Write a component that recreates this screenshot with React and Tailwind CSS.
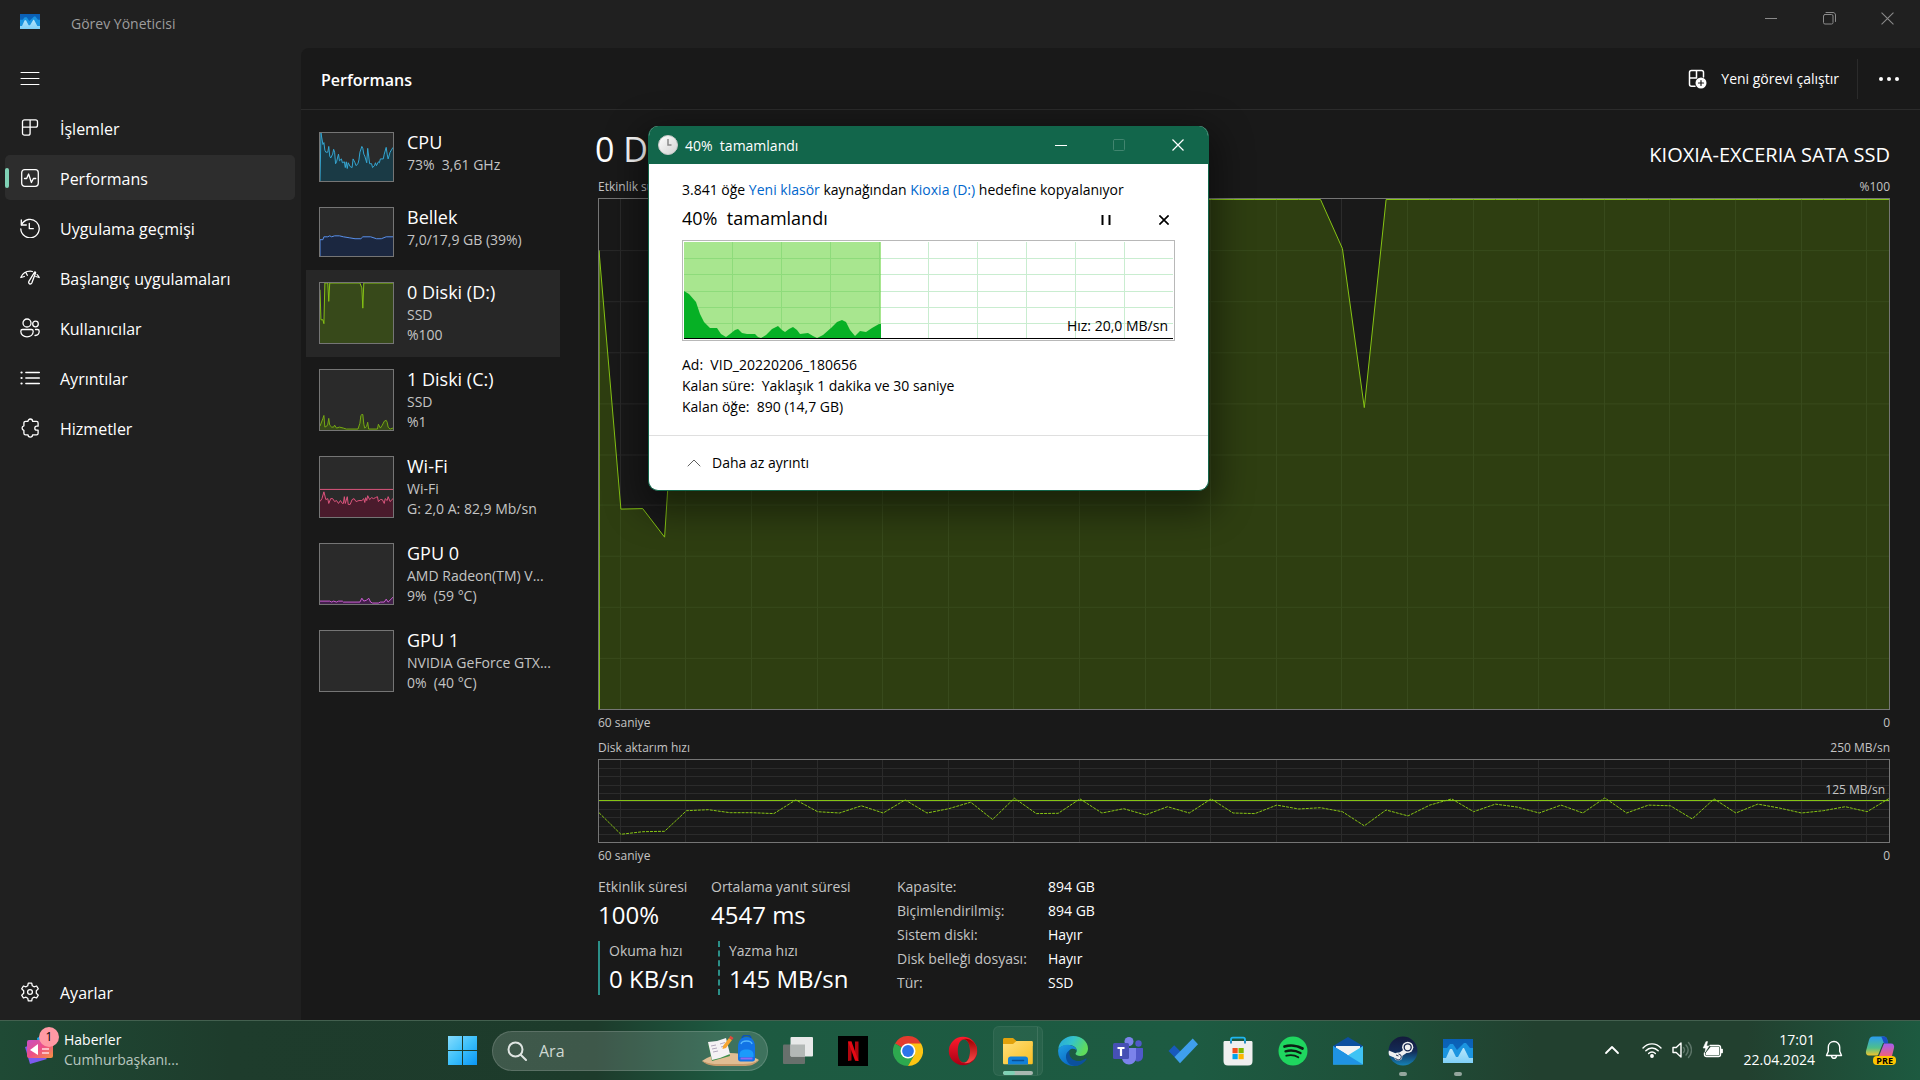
import React from "react";

const WHITE_STROKE = {
  fill: "none",
  stroke: "currentColor",
  strokeLinecap: "round",
  strokeLinejoin: "round",
};

/* ---------- icons ---------- */

function TaskManagerLogo({ className }) {
  return (
    <svg viewBox="0 0 30 24" preserveAspectRatio="none" className={className} aria-hidden="true">
      <defs>
        <linearGradient id="tmBack" x1="0" y1="0" x2="0" y2="1">
          <stop offset="0" stopColor="#0a5fb4" />
          <stop offset="1" stopColor="#0f6cc4" />
        </linearGradient>
        <linearGradient id="tmFront" x1="0" y1="0" x2="0" y2="1">
          <stop offset="0" stopColor="#b9e6fb" />
          <stop offset="1" stopColor="#7fd0f7" />
        </linearGradient>
      </defs>
      <rect width="30" height="24" fill="url(#tmBack)" />
      <path d="M0 9h4l3-4h3l4 6 4-4 3-3h2l4 5h3v15H0z" fill="#1b95e0" />
      <path d="M0 19h3l4-9h2l4 8h2l5-9h1l5 10h4v5H0z" fill="url(#tmFront)" />
    </svg>
  );
}

const navIcons = {
  processes: (
    <path d="M4.500 1.800h11c1.100 0 2 .9 2 2v3.400c0 1.100-.9 2-2 2h-5.400v6c0 1.100-.9 2-2 2H4.500c-1.100 0-2-.9-2-2V3.800c0-1.100.9-2 2-2zM10.100 1.800v7.400M2.500 9.200h7.600" />
  ),
  performance: (
    <>
      <rect x="1.700" y="1.700" width="16.600" height="16.600" rx="3" />
      <path d="M4.500 10.500h2.200L8.600 6l2.800 8.500 2-4h2.300" />
    </>
  ),
  history: (
    <>
      <path d="M1.300 2v5h5" />
      <path d="M1.600 6.800A9.200 9.200 0 1 1 .8 10.800" />
      <path d="M9.300 5.500v5.200h4" />
    </>
  ),
  startup: (
    <>
      <path d="M.8 9.500C2.300 6 6 3.200 10.200 3.200c.8 0 1.500.1 2.200.3M17.100 6.600c.9.900 1.600 1.800 2.100 2.900M1 9.500l3.400-1M15.800 8.500l3.300 1M6 4.700l1.300 2.600" />
      <path d="M14.600 4.200l-5.700 9.200c-.7 1.200.2 2.600 1.400 2.600.7 0 1.200-.4 1.500-1.100l3.800-10.100c.2-.6-.7-1.100-1-.6z" />
    </>
  ),
  users: (
    <>
      <circle cx="7" cy="5" r="4" />
      <circle cx="15.500" cy="6" r="2.800" />
      <path d="M2.600 11.500h8.800c1 0 1.800.8 1.800 1.800 0 3.300-2.600 5.500-6.200 5.500S.8 16.600.8 13.300c0-1 .8-1.800 1.800-1.800zM15.500 11.500h2c1 0 1.700.8 1.700 1.700 0 2.500-1.700 4.200-4.200 4.300" />
    </>
  ),
  details: (
    <>
      <path d="M5.800 4.500h13.600M5.800 10h13.600M5.800 15.500h13.600" />
      <path strokeWidth="2.200" d="M1.500 4.500h.1M1.500 10h.1M1.500 15.500h.1" />
    </>
  ),
  services: (
    <path d="M8 3.300a2.300 2.300 0 0 1 4.600 0h3.900c.9 0 1.600.7 1.600 1.600v3.300h-1.300a2 2 0 0 0 0 4h1.300v3c0 .9-.7 1.600-1.600 1.600h-3.900a2.300 2.300 0 0 1-4.600 0H5.600c-1 0-1.700-.7-1.700-1.600v-2.900a2.300 2.300 0 0 1 0-4.500V4.900c0-.9.700-1.600 1.700-1.600z" />
  ),
  settings: (
    <>
      <circle cx="10" cy="10" r="2.400" />
      <path d="M8.300 1.200h3.400l.6 2.600 1.700 1 2.600-.8 1.700 2.900-2 1.900v2.400l2 1.900-1.700 2.900-2.600-.8-1.700 1-.6 2.600H8.300l-.6-2.600-1.700-1-2.600.8-1.700-2.900 2-1.900V8.800l-2-1.900L3.400 4l2.600.8 1.700-1z" />
    </>
  ),
};

function NavIcon({ name }) {
  return (
    <svg viewBox="0 0 20 20" className="size-5 shrink-0" strokeWidth="1.300" {...WHITE_STROKE} aria-hidden="true">
      {navIcons[name]}
    </svg>
  );
}

function Minus({ className }) {
  return (
    <svg viewBox="0 0 12 12" className={className} aria-hidden="true">
      <path d="M0 6.500h12" stroke="currentColor" />
    </svg>
  );
}

function Cross({ className, width = 1 }) {
  return (
    <svg viewBox="0 0 12 12" className={className} aria-hidden="true">
      <path d="M.5.5l11 11M11.500.5l-11 11" stroke="currentColor" strokeWidth={width} />
    </svg>
  );
}

/* ---------- charts ---------- */

const GREEN = "#86c414";

function areaPath(points, w, h) {
  return `M0 ${h} L${points.map((p) => p.join(" ")).join(" L")} L${w} ${h} Z`;
}

function linePath(points) {
  return `M${points.map((p) => p.join(" ")).join(" L")}`;
}

function pairs(text) {
  return text.split(" ").map((p) => p.split(",").map(Number));
}

function MiniChart({ points, color, fill, tall, limit }) {
  const h = tall ? 62 : 50;
  return (
    <span className={`block w-[75px] shrink-0 border border-[#757575] bg-[#2a2a2a] ${tall ? "h-[62px]" : "h-[50px]"}`}>
      {points && (
        <svg viewBox={`0 0 75 ${h}`} preserveAspectRatio="none" className="block size-full" aria-hidden="true">
          <path d={areaPath(points, 75, h)} fill={fill} />
          <path d={linePath(points)} fill="none" stroke={color} />
          {limit && <path d={`M0 ${limit}h75`} stroke={color} />}
        </svg>
      )}
    </span>
  );
}

const series = {
  cpu: pairs(
    "0,50 1,0 3,12 4,10 5,18 6,20 8,20 9,14 10,24 11,26 13,22 14,17 15,20 16,32 17,30 19,22 20,29 22,27 23,31 25,30 26,36 27,30 28,37 29,31 31,35 33,36 34,27 36,31 37,34 39,32 40,28 41,20 43,14 44,16 45,22 46,24 48,31 49,16 50,24 51,32 53,32 54,36 56,34 57,31 58,34 60,30 61,31 62,27 65,27 66,22 68,15 69,22 70,27 72,20 75,15"
  ),
  memory: pairs("0,50 0,33 3,33 4,30 8,30 10,29 12,30 15,29 20,29 24,30 30,31 36,32 42,32 44,30 52,30 58,32 63,32 68,30 75,30"),
  disk0: pairs("0,7 1,38 3,38 4,42 5,0 8,0 9,19 10,0 41,0 43,5 44,26 45,0 75,0"),
  disk1: pairs(
    "0,58 3,50 4,47 5,59 7,58 8,56 9,50 10,57 12,59 14,59 15,57 17,60 20,59 24,60 27,61 39,61 41,55 42,47 43,46 44,46 45,56 46,60 48,58 49,54 50,61 59,61 60,56 62,60 64,57 66,53 68,52 69,54 70,59 72,61 75,60"
  ),
  wifi: pairs(
    "0,46 2,43 4,36 6,44 8,43 9,48 11,43 13,43 15,46 17,45 19,48 21,45 23,48 24,48 25,41 26,48 28,41 29,49 31,49 33,44 35,43 37,46 40,45 43,45 45,43 46,47 47,42 48,45 49,40 51,44 53,42 55,43 57,42 59,41 60,46 62,44 64,44 66,48 67,43 69,45 70,41 72,46 75,43"
  ),
  gpu0: pairs("0,59 10,59 12,60 14,59 17,60 19,59 23,59 24,60 41,60 43,56 45,59 48,58 50,56 52,60 54,61 60,61 62,60 66,60 68,57 70,60 73,57 75,55"),
};

/* 60 samples of disk activity, 0 = idle and 1 = fully busy */
const activity = Array.from({ length: 60 }, (_, i) => {
  const dips = { 0: 0.9, 1: 0.393, 2: 0.394, 3: 0.338, 7: 0.7, 34: 0.904, 35: 0.592 };
  return i in dips ? dips[i] : 1;
});

/* 60 samples of write speed, in MB/sn */
const transfer = [
  91, 25, 33, 34, 97, 100, 91, 91, 88, 130, 94, 90, 112, 90, 130, 90, 103, 123, 70, 135, 88, 89, 133, 90, 103, 84, 109,
  90, 133, 90, 88, 114, 102, 106, 94, 51, 99, 81, 114, 133, 94, 117, 108, 90, 114, 90, 136, 90, 114, 112, 72, 133, 90,
  117, 105, 90, 97, 109, 94, 134,
];

function Grid({ w, h, rows, color }) {
  const step = w / 59;
  const lines = [];
  for (let i = 1; i < 59; i += 3) {
    lines.push(`M${Math.round(step * i) - 0.5} 0V${h}`);
  }
  for (let r = 1; r < rows; r += 1) {
    lines.push(`M0 ${Math.round((h / rows) * r) + 0.5}H${w}`);
  }
  return <path d={lines.join("")} stroke={color} vectorEffect="non-scaling-stroke" />;
}

function ActivityChart() {
  const w = 1290;
  const h = 509;
  const pts = activity.map((v, i) => [((w / 59) * i).toFixed(1), ((1 - v) * h + 0.5).toFixed(1)]);
  return (
    <div className="flex min-h-[300px] flex-1 flex-col border border-[#757575]">
      <svg viewBox={`0 0 ${w} ${h}`} preserveAspectRatio="none" className="block h-0 min-h-0 w-full flex-1" role="img" aria-label="Etkinlik süresi">
        <Grid w={w} h={h} rows={10} color="#2b2b2b" />
        <path d={areaPath(pts, w, h)} fill="#2e3e11" />
        <clipPath id="activityClip">
          <path d={areaPath(pts, w, h)} />
        </clipPath>
        <g clipPath="url(#activityClip)">
          <Grid w={w} h={h} rows={10} color="#384a1c" />
        </g>
        <path d={`M.5 ${h} L${linePath(pts).slice(1)}`} fill="none" stroke={GREEN} vectorEffect="non-scaling-stroke" />
      </svg>
    </div>
  );
}

function TransferChart() {
  const w = 1290;
  const h = 82;
  const pts = transfer.map((v, i) => [((w / 59) * i).toFixed(1), ((1 - v / 250) * h + 0.5).toFixed(1)]);
  return (
    <div className="relative h-[84px] border border-[#757575]">
      <svg viewBox={`0 0 ${w} ${h}`} preserveAspectRatio="none" className="block size-full" role="img" aria-label="Disk aktarım hızı">
        <Grid w={w} h={h} rows={10} color="#2b2b2b" />
        <path d={`M0 40.500H${w}`} stroke={GREEN} vectorEffect="non-scaling-stroke" />
        <path d={linePath(pts)} fill="none" stroke={GREEN} strokeDasharray="3 1" vectorEffect="non-scaling-stroke" />
      </svg>
      <span className="absolute top-[21px] right-1 text-xs leading-[18px] text-[#c4c4c4]">125 MB/sn</span>
    </div>
  );
}

/* ---------- task manager window ---------- */

const navItems = [
  ["processes", "İşlemler"],
  ["performance", "Performans"],
  ["history", "Uygulama geçmişi"],
  ["startup", "Başlangıç uygulamaları"],
  ["users", "Kullanıcılar"],
  ["details", "Ayrıntılar"],
  ["services", "Hizmetler"],
];

function NavButton({ icon, label, active }) {
  return (
    <button
      type="button"
      aria-current={active ? "page" : undefined}
      className={`flex h-[45px] w-full items-center rounded-[5px] text-left text-base text-white ${active ? "bg-[#2d2d2d]" : ""}`}
    >
      <span className={`mr-[11px] h-5 w-1 rounded-full ${active ? "bg-[#7fd1b5]" : ""}`} />
      <NavIcon name={icon} />
      <span className="ml-5 pt-0.5">{label}</span>
    </button>
  );
}

function Sidebar() {
  return (
    <nav className="flex w-[301px] shrink-0 flex-col px-[5px] pr-1.5">
      <button type="button" aria-label="Gezinti" className="mb-[5px] flex h-[52px] items-center pt-2 pl-[15px] text-white">
        <svg viewBox="0 0 20 16" className="h-4 w-5" {...WHITE_STROKE} aria-hidden="true">
          <path d="M1 2.500h18M1 8.500h18M1 14.500h18" />
        </svg>
      </button>
      <div className="flex flex-1 flex-col gap-[5px]">
        {navItems.map(([icon, label]) => (
          <NavButton key={icon} icon={icon} label={label} active={icon === "performance"} />
        ))}
      </div>
      <div className="pb-1.5">
        <NavButton icon="settings" label="Ayarlar" />
      </div>
    </nav>
  );
}

const resources = [
  { name: "CPU", lines: ["73%  3,61 GHz"], chart: { points: series.cpu, color: "#35a9d6", fill: "#1a3a45" } },
  { name: "Bellek", lines: ["7,0/17,9 GB (39%)"], chart: { points: series.memory, color: "#5b93ee", fill: "#1b2740" } },
  { name: "0 Diski (D:)", lines: ["SSD", "%100"], active: true, chart: { points: series.disk0, color: GREEN, fill: "#37491a", tall: true } },
  { name: "1 Diski (C:)", lines: ["SSD", "%1"], chart: { points: series.disk1, color: "#78ab14", fill: "#37491a", tall: true } },
  { name: "Wi-Fi", lines: ["Wi-Fi", "G: 2,0 A: 82,9 Mb/sn"], chart: { points: series.wifi, color: "#e0567f", fill: "#4a1b2c", tall: true, limit: 33.5 } },
  { name: "GPU 0", lines: ["AMD Radeon(TM) V...", "9%  (59 °C)"], chart: { points: series.gpu0, color: "#cf5fd8", fill: "#42204a", tall: true } },
  { name: "GPU 1", lines: ["NVIDIA GeForce GTX...", "0%  (40 °C)"], chart: { tall: true } },
];

function ResourceList() {
  return (
    <div className="ml-[5px] flex w-[254px] shrink-0 flex-col pt-2.5">
      {resources.map((r) => (
        <button
          key={r.name}
          type="button"
          className={`flex gap-[13px] py-3 pl-[13px] text-left ${r.chart.tall ? "h-[87px]" : "h-[75px]"} ${r.active ? "bg-[#272727]" : ""}`}
        >
          <MiniChart {...r.chart} />
          <span className="block whitespace-pre">
            <span className="-mt-0.5 mb-px block text-lg leading-6 text-white">{r.name}</span>
            {r.lines.map((l) => (
              <span key={l} className="block text-sm leading-5 text-[#c4c4c4]">
                {l}
              </span>
            ))}
          </span>
        </button>
      ))}
    </div>
  );
}

function ChartCaption({ left, right, className }) {
  return (
    <div className={`flex justify-between text-xs leading-[18px] text-[#c4c4c4] ${className}`}>
      <span>{left}</span>
      <span>{right}</span>
    </div>
  );
}

function Stat({ label, value, border }) {
  return (
    <div className={border}>
      <dt className="text-sm leading-5 text-[#c4c4c4]">{label}</dt>
      <dd className="mt-0.5 text-2xl leading-8 text-white">{value}</dd>
    </div>
  );
}

const facts = [
  ["Kapasite:", "894 GB"],
  ["Biçimlendirilmiş:", "894 GB"],
  ["Sistem diski:", "Hayır"],
  ["Disk belleği dosyası:", "Hayır"],
  ["Tür:", "SSD"],
];

function DiskDetail() {
  return (
    <section className="ml-[38px] flex min-w-0 flex-1 flex-col pt-4 pr-[30px] pb-[25px]">
      <div className="flex items-baseline justify-between text-white">
        <h2 className="-ml-[3px] text-[34px] leading-[46px]">0 Diski (D:)</h2>
        <span className="text-xl leading-6">KIOXIA-EXCERIA SATA SSD</span>
      </div>
      <ChartCaption left="Etkinlik süresi" right="%100" className="mt-1.5 mb-0.5" />
      <ActivityChart />
      <ChartCaption left="60 saniye" right="0" className="mt-1" />
      <ChartCaption left="Disk aktarım hızı" right="250 MB/sn" className="mt-[7px] mb-0.5" />
      <TransferChart />
      <ChartCaption left="60 saniye" right="0" className="mt-1" />
      <div className="mt-3 flex">
        <dl className="grid w-[299px] grid-cols-[113px_auto] gap-y-2.5">
          <Stat label="Etkinlik süresi" value="100%" />
          <Stat label="Ortalama yanıt süresi" value="4547 ms" />
          <Stat label="Okuma hızı" value="0 KB/sn" border="border-l-2 border-[#2b8f88] pl-[9px]" />
          <Stat label="Yazma hızı" value="145 MB/sn" border="ml-[7px] border-l-2 border-dashed border-[#2b8f88] pl-[9px]" />
        </dl>
        <dl className="-mt-0.5 grid grid-cols-[151px_auto] content-start text-sm leading-6">
          {facts.map(([k, v]) => (
            <React.Fragment key={k}>
              <dt className="text-[#c4c4c4]">{k}</dt>
              <dd className="text-white">{v}</dd>
            </React.Fragment>
          ))}
        </dl>
      </div>
    </section>
  );
}

function TitleBar() {
  return (
    <header className="flex h-12 shrink-0 items-start bg-[#202020]">
      <TaskManagerLogo className="mt-3.5 ml-5 h-[15px] w-5" />
      <h1 className="mt-3.5 ml-[31px] flex-1 text-sm leading-5 text-[#9d9d9d]">Görev Yöneticisi</h1>
      <div className="flex text-[#8a8a8a]">
        <button type="button" aria-label="Simge durumuna küçült" className="grid h-9 w-[58px] place-items-center">
          <Minus className="size-3" />
        </button>
        <button type="button" aria-label="Önceki boyut" className="grid h-9 w-[58px] place-items-center">
          <svg viewBox="0 0 13 13" className="size-[13px]" {...WHITE_STROKE} aria-hidden="true">
            <rect x=".5" y="2.500" width="9.500" height="9.500" rx="1.500" />
            <path d="M3 .5h7c1.400 0 2.500 1.100 2.500 2.500v6.500" />
          </svg>
        </button>
        <button type="button" aria-label="Kapat" className="mr-[3px] grid h-9 w-[59px] place-items-center">
          <Cross className="size-[13px]" />
        </button>
      </div>
    </header>
  );
}

function Toolbar() {
  return (
    <div className="flex h-[62px] shrink-0 items-center border-b border-[#2b2b2b] pl-5 text-white">
      <h2 className="flex-1 pt-0.5 text-base font-semibold">Performans</h2>
      <button type="button" className="flex items-center text-sm">
        <svg viewBox="0 0 20 20" className="mr-3.5 size-5" strokeWidth="1.500" {...WHITE_STROKE} aria-hidden="true">
          <path d="M8 17.200H4.500c-1.200 0-2-.8-2-2V3.500c0-1.200.8-2 2-2h10c1.200 0 2 .8 2 2V8M9.500 1.500V9M2.500 9h7" />
          <circle cx="14" cy="14" r="5.500" fill="#fff" stroke="none" />
          <path d="M14 11.500v5M11.500 14h5" stroke="#191919" strokeWidth="1.200" />
        </svg>
        Yeni görevi çalıştır
      </button>
      <span className="ml-[18px] h-10 w-px bg-[#2b2b2b]" />
      <button type="button" aria-label="Diğer" className="grid h-10 w-[62px] place-items-center">
        <svg viewBox="0 0 20 4" className="h-1 w-5" fill="currentColor" aria-hidden="true">
          <circle cx="2" cy="2" r="2" />
          <circle cx="10" cy="2" r="2" />
          <circle cx="18" cy="2" r="2" />
        </svg>
      </button>
    </div>
  );
}

/* ---------- copy dialog ---------- */

const copyCurve = pairs(
  "0,49 5,52 12,60 16,72 20,80 26,86 33,86 37,92 42,95 46,92 51,88 54,87 58,91 63,92 71,92 74,95 77,96 82,93 88,87 94,84 98,88 101,90 105,87 109,85 113,88 116,92 124,91 129,94 133,96 139,93 147,86 153,80 158,78 162,80 166,88 171,94 176,89 182,90 188,86 195,82 197,82"
);

function CopyGraph() {
  const lines = [];
  for (let i = 1; i < 10; i += 1) lines.push(`M${49 * i - 0.5} 0V96`);
  [16.5, 32.5, 49.5, 65.5, 81.5].forEach((y) => lines.push(`M0 ${y}H489`));
  return (
    <div className="relative mt-2 border border-[#b8b8b8] p-px">
      <svg viewBox="0 0 489 97" preserveAspectRatio="none" className="block h-[97px] w-full" role="img" aria-label="Kopyalama hızı">
        <path d={lines.join("")} stroke="#c9edd0" />
        <rect width="197" height="97" fill="#a8e68f" />
        <clipPath id="copyDone">
          <rect width="197" height="97" />
        </clipPath>
        <path d={lines.join("")} stroke="#8edb7b" clipPath="url(#copyDone)" />
        <path d={areaPath(copyCurve, 197, 97)} fill="#06b025" />
        <path d="M0 96.500H489" stroke="#000" />
      </svg>
      <span className="absolute right-1.5 bottom-1 text-sm leading-5">Hız: 20,0 MB/sn</span>
    </div>
  );
}

function CopyDialog() {
  return (
    <div
      role="dialog"
      aria-label="40% tamamlandı"
      className="absolute top-[126px] left-[648px] w-[561px] overflow-hidden rounded-[10px] border border-t-0 border-[#12664b] bg-white text-sm text-black shadow-[0_12px_36px_8px_rgba(0,0,0,0.45)]"
    >
      <div className="flex h-[38px] items-center bg-[#12664b] pl-[9px] text-white">
        <svg viewBox="0 0 20 20" className="size-5" aria-hidden="true">
          <defs>
            <linearGradient id="clockFace" x1="0" y1="0" x2="1" y2="1">
              <stop offset="0" stopColor="#fff" />
              <stop offset="1" stopColor="#d2d2d2" />
            </linearGradient>
          </defs>
          <circle cx="10" cy="10" r="9.500" fill="url(#clockFace)" stroke="#c8c8c8" />
          <path d="M10 4v6h3.500" fill="none" stroke="#8a8a8a" strokeWidth="1.500" />
        </svg>
        <span className="ml-[7px] flex-1 pt-0.5 whitespace-pre">40%  tamamlandı</span>
        <button type="button" aria-label="Simge durumuna küçült" className="grid h-full w-[58px] place-items-center">
          <Minus className="size-3" />
        </button>
        <button type="button" disabled aria-label="Ekranı kapla" className="grid h-full w-[58px] place-items-center text-[#41856f]">
          <svg viewBox="0 0 12 12" className="size-3" {...WHITE_STROKE} aria-hidden="true">
            <rect x=".5" y=".5" width="11" height="11" rx="1" />
          </svg>
        </button>
        <button type="button" aria-label="Kapat" className="grid h-full w-[60px] place-items-center">
          <Cross className="size-3" width={1.2} />
        </button>
      </div>
      <div className="px-[33px] pt-4 pb-[18px]">
        <p className="leading-5">
          3.841 öğe{" "}
          <a href="#kaynak" className="text-[#0066cc]">
            Yeni klasör
          </a>{" "}
          kaynağından{" "}
          <a href="#hedef" className="text-[#0066cc]">
            Kioxia (D:)
          </a>{" "}
          hedefine kopyalanıyor
        </p>
        <div className="mt-1 -mr-[3px] flex h-7 items-center">
          <h3 className="flex-1 text-lg whitespace-pre">40%  tamamlandı</h3>
          <button type="button" aria-label="Duraklat" className="grid size-7 place-items-center pt-1">
            <svg viewBox="0 0 10 10" className="size-2.5" aria-hidden="true">
              <path d="M1.500 0v10M8.500 0v10" stroke="#000" strokeWidth="2" />
            </svg>
          </button>
          <button type="button" aria-label="İptal" className="ml-[30px] grid size-7 place-items-center pt-1">
            <Cross className="size-2.5" width={2} />
          </button>
        </div>
        <CopyGraph />
        <div className="mt-[13px] leading-[21px] whitespace-pre">
          <p>Ad:  VID_20220206_180656</p>
          <p>Kalan süre:  Yaklaşık 1 dakika ve 30 saniye</p>
          <p>Kalan öğe:  890 (14,7 GB)</p>
        </div>
      </div>
      <div className="border-t border-[#dfdfdf]">
        <button type="button" className="flex h-[54px] items-center pl-[38px] text-sm">
          <svg viewBox="0 0 14 8" className="mr-[11px] h-2 w-3.5" {...WHITE_STROKE} stroke="#606060" aria-hidden="true">
            <path d="M1 7l6-6 6 6" />
          </svg>
          Daha az ayrıntı
        </button>
      </div>
    </div>
  );
}

/* ---------- taskbar ---------- */

const appIcons = {
  "Görev görünümü": (
    <>
      <rect x="0" y="8.500" width="22" height="19.500" rx="1" fill="#68706c" />
      <rect x="7.500" y="1" width="22.500" height="19.500" rx="1" fill="#e8e9e9" />
      <path d="M7.500 8.500H22v12H8.500a1 1 0 0 1-1-1z" fill="#b3b8b6" />
    </>
  ),
  Netflix: (
    <>
      <rect width="30" height="30" fill="#000" />
      <path d="M10 5.500h3.500v19L10 25zM17 5.500h3.500v19.500l-3.500-.5z" fill="#b1060f" />
      <path d="M10 5.500h3.500L20.500 25l-3.500-.5z" fill="#e50914" />
    </>
  ),
  Chrome: (
    <>
      <path d="M15 15L2 7.500A15 15 0 0 1 28 7.500z" fill="#e33b2e" />
      <path d="M15 15L2 7.500A15 15 0 0 0 15 30l6.500-11.200z" fill="#2da94f" />
      <path d="M15 7.500h13A15 15 0 0 1 15 30l6.500-11.200z" fill="#fdc413" />
      <circle cx="15" cy="15" r="7.500" fill="#fff" />
      <circle cx="15" cy="15" r="5.900" fill="#2b74ea" />
    </>
  ),
  Opera: (
    <>
      <defs>
        <linearGradient id="operaA" x1="0" y1="0" x2="0" y2="1">
          <stop offset="0" stopColor="#ff1b2d" />
          <stop offset="1" stopColor="#a70014" />
        </linearGradient>
        <linearGradient id="operaB" x1="0" y1="0" x2="0" y2="1">
          <stop offset="0" stopColor="#9c0000" />
          <stop offset="1" stopColor="#ff4b4b" />
        </linearGradient>
      </defs>
      <path fillRule="evenodd" d="M15 .8a14.200 14.200 0 1 1 0 28.400 14.200 14.200 0 1 1 0-28.400zM16 3.500c-4 0-6.200 5-6.200 11.500S12 26.500 16 26.500 22 21.500 22 15 20 3.500 16 3.500z" fill="url(#operaA)" />
      <path d="M11 6C16-1 29 4 29 15S16 31 11 24c2 2.500 4 3 6 2.500 3-.8 5-5.500 5-11.500S20 4.300 17 3.500c-2-.5-4 0-6 2.500z" fill="url(#operaB)" />
    </>
  ),
  "Dosya Gezgini": (
    <>
      <defs>
        <linearGradient id="folder" x1="0" y1="0" x2="1" y2="1">
          <stop offset="0" stopColor="#ffdf7a" />
          <stop offset="1" stopColor="#f9bf22" />
        </linearGradient>
      </defs>
      <path d="M0 3.500C0 2.700.7 2 1.500 2H10l3.500 3H28c1 0 1.800.5 1.800 1.500V10H0z" fill="#e2a20c" />
      <path d="M0 8h10l3.500-3h15c.8 0 1.300.6 1.300 1.400V27c0 .8-.5 1.300-1.300 1.300h-27C.6 28.300 0 27.800 0 27z" fill="url(#folder)" />
      <path d="M5 28.500v-5.200c0-1.600 1.100-2.700 2.700-2.700h14.600c1.600 0 2.700 1.100 2.700 2.700v5.200z" fill="#1280d8" />
      <path d="M9.500 24.500h11" stroke="#0a4f94" strokeWidth="1.500" strokeLinecap="round" />
    </>
  ),
  Edge: (
    <>
      <defs>
        <linearGradient id="edgeA" x1="0" y1="0" x2="1" y2=".4">
          <stop offset="0" stopColor="#23a3e0" />
          <stop offset=".5" stopColor="#35c4c9" />
          <stop offset="1" stopColor="#5fdc5c" />
        </linearGradient>
        <linearGradient id="edgeB" x1="0" y1="0" x2=".7" y2="1">
          <stop offset="0" stopColor="#1f9fe4" />
          <stop offset="1" stopColor="#0762c0" />
        </linearGradient>
      </defs>
      <path d="M.3 13C1 5.500 7.500 0 15.200 0 24 0 30 6 30 12.500c0 4.500-3.300 7.500-7.500 7.500-3 0-5-1-5-2.200 0-.8 1.300-1.500 1.300-3.300 0-3-3.500-5.500-7.800-5.500C6 9 2.500 10.500.3 13z" fill="url(#edgeA)" />
      <path d="M.2 13.500C2 10.300 6 8.500 10 8.800c5 .3 8.800 3 8.800 6-1-1.600-3-2.500-5-2-3.300.8-4.500 4.700-3.300 8.300 1.700 5 7 7.900 12 6.800A15 15 0 0 1 .2 13.500z" fill="url(#edgeB)" />
      <path d="M12 14c-2 4 .5 9.500 6 10.800 3.500.8 7-.3 9.800-2.300.5-.3 1 .2.700.7C26.500 26.500 22 30 16.500 30 10.500 29.500 7.500 24 8 19.500c.3-2.500 2-4.500 4-5.500z" fill="#0b519d" />
    </>
  ),
  Teams: (
    <>
      <circle cx="16" cy="5.500" r="4.500" fill="#7b83eb" />
      <circle cx="25.500" cy="7.500" r="3.200" fill="#5059c9" />
      <path d="M20 12h9.500c.3 0 .5.200.5.500V20c0 3.300-2.500 5.500-5.200 5.500S20 23 20 20z" fill="#5059c9" />
      <path d="M9 12h14v9.500c0 4-3 7-7 7s-7-3-7-7z" fill="#7b83eb" />
      <rect x="0" y="7" width="16" height="16" rx="1.500" fill="#4650b4" />
      <path d="M4.500 11h7v2.100H9.100v6.900H6.900v-6.900H4.500z" fill="#fff" />
    </>
  ),
  "To Do": (
    <>
      <path d="M.5 15l5.700-5.700 8.500 8.500-5.800 5.600z" fill="#185abd" />
      <path d="M6.500 21L24.700 2.500 30 8.300 12 27.200z" fill="#3f9fec" />
    </>
  ),
  Store: (
    <>
      <path d="M8 7V3.500C8 2.300 8.700 1.700 9.800 1.700h10.400c1.100 0 1.800.6 1.800 1.800V7" fill="none" stroke="#1fb6f0" strokeWidth="1.800" />
      <path d="M.5 6.500C.5 5.500 1 5 2 5h26c1 0 1.500.5 1.500 1.500V25c0 3-1.500 4.500-4.500 4.500H5C2 29.500.5 28 .5 25z" fill="#efefef" />
      <path d="M8 7.500V5M22 7.500V5" stroke="#1583bd" strokeWidth="1.800" />
      <rect x="9.500" y="12" width="5.200" height="5.200" fill="#f04e1f" />
      <rect x="15.500" y="12" width="5.200" height="5.200" fill="#7eb900" />
      <rect x="9.500" y="18" width="5.200" height="5.200" fill="#00a3ee" />
      <rect x="15.500" y="18" width="5.200" height="5.200" fill="#fdb700" />
    </>
  ),
  Spotify: (
    <>
      <circle cx="15" cy="15" r="14.500" fill="#1fd65f" />
      <g fill="none" stroke="#0c1f14" strokeLinecap="round">
        <path d="M6.500 10.500c5.500-1.700 13-1 18 2" strokeWidth="2.700" />
        <path d="M7.500 15.300c5-1.400 10.500-.8 15 1.800" strokeWidth="2.300" />
        <path d="M8.300 19.700c4-1 8.500-.6 12 1.500" strokeWidth="1.900" />
      </g>
    </>
  ),
  Posta: (
    <>
      <path d="M0 10L15 1l15 9v5H0z" fill="#0d4f9e" />
      <path d="M3 10h24v6l-12 7L3 16z" fill="#f2f2f2" />
      <path d="M0 10l15 9L0 28.500z" fill="#1a8fe0" />
      <path d="M30 10L0 28.500h30z" fill="#3fc3f4" />
      <path d="M0 10l30 18.500H0z" fill="#1f93e3" />
      <path d="M3 10h24L15 19z" fill="#f2f2f2" />
    </>
  ),
  Steam: (
    <>
      <defs>
        <linearGradient id="steam" x1="0" y1="0" x2="0" y2="1">
          <stop offset="0" stopColor="#131a3b" />
          <stop offset=".5" stopColor="#142a56" />
          <stop offset="1" stopColor="#1582b6" />
        </linearGradient>
        <clipPath id="steamDisc">
          <circle cx="15" cy="15" r="14.500" />
        </clipPath>
      </defs>
      <circle cx="15" cy="15" r="14.500" fill="url(#steam)" />
      <g clipPath="url(#steamDisc)">
        <path d="M0 16.500l9.500 4 9.500-6.500" fill="none" stroke="#f0f0f0" strokeWidth="4.500" />
      </g>
      <circle cx="19.700" cy="11.300" r="5.600" fill="#f0f0f0" />
      <circle cx="19.700" cy="11.300" r="3.500" fill="#f0f0f0" stroke="#14244c" strokeWidth="1.300" />
      <circle cx="10.300" cy="20.500" r="4" fill="#f0f0f0" />
      <path d="M8 19l2.500 1M7.500 22a3 3 0 1 0 3-4" fill="none" stroke="#14244c" strokeWidth=".9" />
    </>
  ),
};

function SearchArt() {
  return (
    <svg viewBox="0 0 57 32" className="h-8 w-[57px]" aria-hidden="true">
      <path d="M0 26c6-4 14-8 28-8s24 4 29 7c-5 4-10 5-16 5H17c-8 0-13-2-17-4z" fill="#e0bd93" />
      <path d="M0 26c6 2.500 11 3 17 3h24c6 0 11-1 16-4-4 5-9 6-16 6H17c-8 0-14-2-17-5z" fill="#c79a6a" />
      <path d="M6 9l18-4 4 16-18 5z" fill="#3f8f4a" />
      <path d="M6 7l9-1 3 17-8 2zM15 6l9-3 4 16-10 4z" fill="#f5f2f4" />
      <path d="M9 11l5-1M10 14l5-1M11 17l5-1M18 9l5-1.500M19 12l5-1.500" stroke="#b3a9bd" />
      <path d="M21 11l6-8 3 2-6 8-3.500 1z" fill="#f6a531" />
      <path d="M27 3l1.500-2.300L31.500 3 30 5z" fill="#e0483c" />
      <path d="M40 4c0-5 9-5 9 0" fill="none" stroke="#0c53b8" strokeWidth="1.500" />
      <path d="M36 12c0-6 3-10 8.500-10S53 6 53 12v12c0 1.500-1 2.500-2.500 2.500h-12C37 26.500 36 25.500 36 24z" fill="#1273e6" />
      <path d="M39 9c1-4 10-4 11 0" fill="none" stroke="#52b6fb" strokeWidth="1.500" />
      <path d="M37.500 20c0-4 2.500-5.500 7-5.500s7 1.500 7 5.500v2h-14z" fill="#1b9bfb" />
      <path d="M38.500 23.500h12" stroke="#8f6bf0" strokeWidth="2" />
    </svg>
  );
}

function AppButton({ name }) {
  const active = name === "Dosya Gezgini";
  const running = name === "Steam" || name === "Görev Yöneticisi";
  return (
    <button
      type="button"
      aria-label={name}
      className={`relative flex size-[50px] items-center justify-center rounded-md ${active ? "border border-white/5 bg-white/5" : ""}`}
    >
      {active && <span className="absolute inset-y-0 right-1 w-px bg-white/10" />}
      {name === "Görev Yöneticisi" ? (
        <TaskManagerLogo className="h-6 w-[30px]" />
      ) : (
        <svg viewBox="0 0 30 30" className="size-[30px]" aria-hidden="true">
          {appIcons[name]}
        </svg>
      )}
      {active && (
        <span className="absolute bottom-0 left-[9px] flex h-1 w-[30px] overflow-hidden rounded-full bg-[#a9b8b1]">
          <span className="h-full w-3 rounded-full bg-[#7fd1b5]" />
        </span>
      )}
      {running && <span className="absolute bottom-0 h-1 w-2 rounded-full bg-[#94a69d]" />}
    </button>
  );
}

function NewsWidget() {
  return (
    <button type="button" className="flex items-center gap-[9px] justify-self-start pb-0.5 pl-[25px] text-left">
      <span className="relative">
        <svg viewBox="0 0 30 30" className="size-[30px]" aria-hidden="true">
          <defs>
            <linearGradient id="news" x1="0" y1="0" x2="1" y2="1">
              <stop offset="0" stopColor="#c54fc4" />
              <stop offset=".5" stopColor="#ee4f86" />
              <stop offset="1" stopColor="#f79440" />
            </linearGradient>
          </defs>
          <path d="M12 3l6-3 4 8-9 4z" fill="#19a3e8" />
          <path d="M0 12l6-2 16 14-17 5z" fill="#7d5af0" />
          <rect x="2" y="5" width="26" height="18" rx="2" fill="url(#news)" />
          <path d="M5 15l8-6v11z" fill="#fff" />
          <path d="M17 14h7M17 18h7" stroke="#ffd9de" strokeWidth="1.500" />
        </svg>
        <span className="absolute -top-2 left-3.5 grid size-5 place-items-center rounded-full bg-[#ff99a4] text-xs text-black">1</span>
      </span>
      <span className="text-sm leading-5">
        <span className="block text-white">Haberler</span>
        <span className="block text-[#b9c7c0]">Cumhurbaşkanı...</span>
      </span>
    </button>
  );
}

function Tray() {
  return (
    <div className="flex items-center justify-self-end pr-[25px] pb-0.5 text-white">
      <button type="button" aria-label="Gizli simgeler" className="mr-[22px]">
        <svg viewBox="0 0 16 10" className="h-2.5 w-4" strokeWidth="1.800" {...WHITE_STROKE} aria-hidden="true">
          <path d="M2 8l6-6 6 6" />
        </svg>
      </button>
      <button type="button" aria-label="Ağ, ses ve pil" className="flex items-center gap-2.5">
        <svg viewBox="0 0 20 16" className="h-4 w-5" strokeWidth="1.400" {...WHITE_STROKE} aria-hidden="true">
          <path d="M1 6c5-5.500 13-5.500 18 0M3.800 8.800c3.500-3.800 8.900-3.800 12.400 0M6.600 11.500c2-2.100 4.800-2.100 6.800 0" />
          <circle cx="10" cy="14" r="1.200" fill="currentColor" />
        </svg>
        <svg viewBox="0 0 20 18" className="h-[18px] w-5" strokeWidth="1.400" {...WHITE_STROKE} aria-hidden="true">
          <path d="M1 6.500h3.200L9 2v14l-4.800-4.500H1z" />
          <path d="M11.500 6.500c1.200 1.500 1.200 3.500 0 5M14 4c2.600 3 2.600 7 0 10M16.500 1.500c4 4.500 4 10.500 0 15" stroke="#5c7468" />
        </svg>
        <svg viewBox="0 0 21 18" className="h-[18px] w-[21px]" strokeWidth="1.400" {...WHITE_STROKE} aria-hidden="true">
          <path d="M8 4.500h8.500c1 0 2 .8 2 2v7c0 1.200-1 2-2 2h-12c-1.200 0-2-.8-2-2v-1.500" />
          <path d="M19 8.500h1.200v3H19z" />
          <path d="M9 6.500h7.500v7h-12V12z" fill="currentColor" />
          <path d="M4 .8L1.200 7h2.500l-.5 4L7 5H4.500L5.500.8z" fill="currentColor" strokeWidth=".6" />
        </svg>
      </button>
      <button type="button" className="ml-2 w-[84px] text-right text-sm leading-5">
        <span className="block">17:01</span>
        <span className="block">22.04.2024</span>
      </button>
      <button type="button" aria-label="Bildirimler" className="mr-[22px] ml-2.5">
        <svg viewBox="0 0 18 20" className="h-5 w-[18px]" strokeWidth="1.400" {...WHITE_STROKE} aria-hidden="true">
          <path d="M9 1.500c-3.300 0-5.700 2.500-5.700 5.800v4L1.500 15.500h15l-1.800-4.200v-4C14.700 4 12.300 1.500 9 1.500zM6.500 15.800c.2 1.500 1.200 2.500 2.500 2.500s2.300-1 2.500-2.500" />
        </svg>
      </button>
      <button type="button" aria-label="Copilot" className="relative">
        <svg viewBox="0 0 30 30" className="size-[30px]" aria-hidden="true">
          <defs>
            <linearGradient id="coA" x1="0" y1="0" x2="0" y2="1">
              <stop offset="0" stopColor="#2a9df0" />
              <stop offset=".6" stopColor="#4fbf8a" />
              <stop offset="1" stopColor="#f2c52b" />
            </linearGradient>
            <linearGradient id="coB" x1="0" y1="0" x2="0" y2="1">
              <stop offset="0" stopColor="#a55cf0" />
              <stop offset="1" stopColor="#f0617a" />
            </linearGradient>
          </defs>
          <path d="M8 1.500h10.500c2 0 3 1 3.500 2.500l1 4h-5l-4.500 11c-.4 1-1 1.500-2 1.500H4C1.500 20.500.5 18.500 1 16L4 5c.7-2.300 1.700-3.500 4-3.500z" fill="url(#coA)" />
          <path d="M16 1.500h3c2 0 2.700 1 3.200 2.500l1.200 4.500H19L17 3z" fill="#1b4fc4" />
          <path d="M19 8.500h7c2.500 0 3.500 2 3 4.500l-2 8H14z" fill="url(#coB)" />
        </svg>
        <span className="absolute -right-px bottom-0 rounded-sm bg-[#fdc500] px-[3px] text-[9px] leading-[9px] font-bold text-black">PRE</span>
      </button>
    </div>
  );
}

function Taskbar() {
  return (
    <footer className="grid h-[60px] shrink-0 grid-cols-[1fr_auto_1fr] items-center border-t border-[#43604f] bg-[linear-gradient(90deg,#1f4a35_0%,#1e3c2c_12%,#1d3b2b_31%,#1d5a41_38%,#1d5b42_62%,#1e5039_72%,#22402f_80%,#22402f_91%,#1d5a40_100%)]">
      <NewsWidget />
      <div className="flex items-center gap-[5px]">
        <button type="button" aria-label="Başlat" className="grid size-[50px] place-items-center">
          <svg viewBox="0 0 29 29" className="size-[29px]" aria-hidden="true">
            <defs>
              <linearGradient id="win" x1="0" y1="0" x2="29" y2="29" gradientUnits="userSpaceOnUse">
                <stop offset="0" stopColor="#85dcfd" />
                <stop offset=".5" stopColor="#3cc0fb" />
                <stop offset="1" stopColor="#0a96f5" />
              </linearGradient>
            </defs>
            <path d="M0 0h14v14H0zM15 0h14v14H15zM0 15h14v14H0zM15 15h14v14H15z" fill="url(#win)" />
          </svg>
        </button>
        <label className="flex h-10 w-[276px] items-center rounded-full border border-white/15 bg-white/15 pr-2 pl-3.5">
          <svg viewBox="0 0 20 20" className="size-5 text-[#dfe5e2]" strokeWidth="2" {...WHITE_STROKE} aria-hidden="true">
            <circle cx="8.500" cy="8.500" r="7" />
            <path d="M13.700 13.700L19 19" />
          </svg>
          <input type="text" aria-label="Ara" placeholder="Ara" className="ml-3 w-0 min-w-0 flex-1 bg-transparent text-base text-white outline-none placeholder:text-[#cfd8d3]" />
          <SearchArt />
        </label>
        {[...Object.keys(appIcons), "Görev Yöneticisi"].map((n) => (
          <AppButton key={n} name={n} />
        ))}
      </div>
      <Tray />
    </footer>
  );
}

export default function App() {
  return (
    <div className="relative flex min-h-screen flex-col bg-[#202020] font-['Open_Sans','Noto_Sans',sans-serif]">
      <TitleBar />
      <div className="flex flex-1">
        <Sidebar />
        <main className="flex min-w-0 flex-1 flex-col rounded-tl-lg bg-[#191919]">
          <Toolbar />
          <div className="flex flex-1">
            <ResourceList />
            <DiskDetail />
          </div>
        </main>
      </div>
      <Taskbar />
      <CopyDialog />
    </div>
  );
}
